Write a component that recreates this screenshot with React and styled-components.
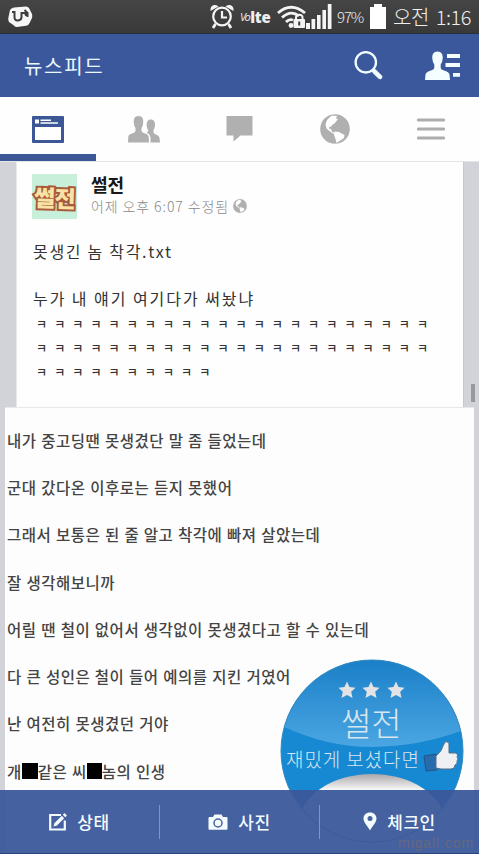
import React from "react";
import styled, { createGlobalStyle } from "styled-components";

const photoLines = [
  "내가 중고딩땐 못생겼단 말 좀 들었는데",
  "군대 갔다온 이후로는 듣지 못했어",
  "그래서 보통은 된 줄 알고 착각에 빠져 살았는데",
  "잘 생각해보니까",
  "어릴 땐 철이 없어서 생각없이 못생겼다고 할 수 있는데",
  "다 큰 성인은 철이 들어 예의를 지킨 거였어",
  "난 여전히 못생겼던 거야",
];

const laughs = [22, 22, 10];

export default function App() {
  return (
    <>
      <GlobalStyle />
      <Screen>
        <StatusBar />
        <Header>
          <HeaderTitle>뉴스피드</HeaderTitle>
          <HeaderIcons>
            <SearchIcon />
            <ContactsIcon />
          </HeaderIcons>
        </Header>
        <Tabs>
          <Tab $active>
            <FeedIcon />
          </Tab>
          <Tab>
            <FriendsIcon />
          </Tab>
          <Tab>
            <ChatIcon />
          </Tab>
          <Tab>
            <GlobeIcon size={30} />
          </Tab>
          <Tab>
            <MenuIcon />
          </Tab>
        </Tabs>
        <Feed>
          <Post>
            <PostHead>
              <Avatar>
                <span>썰전</span>
              </Avatar>
              <PostInfo>
                <Author>썰전</Author>
                <Meta>
                  <span>어제 오후 6:07 수정됨</span>
                  <GlobeIcon size={14} />
                </Meta>
              </PostInfo>
            </PostHead>
            <PostTitle>못생긴 놈 착각.txt</PostTitle>
            <PostText>누가 내 얘기 여기다가 써놨냐</PostText>
            <Laughs>
              {laughs.map((count, i) => (
                <p key={i}>{Array(count).fill("ㅋ").join(" ")}</p>
              ))}
            </Laughs>
          </Post>
          <Photo>
            {photoLines.map((line) => (
              <PhotoLine key={line}>{line}</PhotoLine>
            ))}
            <PhotoLine>
              개<Censor $width={16} />
              같은 씨<Censor $width={15} />
              놈의 인생
            </PhotoLine>
            <Badge />
          </Photo>
          <ScrollThumb />
        </Feed>
        <Composer>
          <Action>
            <EditIcon />
            <span>상태</span>
          </Action>
          <Action>
            <CameraIcon />
            <span>사진</span>
          </Action>
          <Action>
            <PinIcon />
            <span>체크인</span>
          </Action>
          <Watermark>migall.com</Watermark>
        </Composer>
      </Screen>
    </>
  );
}

function StatusBar() {
  return (
    <StyledStatusBar>
      <svg width="25" height="22" viewBox="0 0 25 22">
        <path
          d="M6 1.5 18 .5Q20 .5 21 2L24 8Q24.5 10 24 12L21 18Q20 19.5 18 19.7L9 21Q7 21 6 19.5L1 16Q0 14 .3 12L2 4Q3 2 6 1.5Z"
          fill="#f6f6f6"
        />
        <path
          d="M4 6H6.500V11Q6.500 14.800 10 14.500 13.500 14.200 13.500 11V7H19.500M16.500 4 19.500 7 17 9.500M19.500 7V11"
          fill="none"
          stroke="#3d3d3d"
          strokeWidth="2"
        />
      </svg>
      <StatusItems>
        <svg width="24" height="25" viewBox="0 0 24 25">
          <g fill="none" stroke="#f4f4f4" strokeWidth="2.2">
            <circle cx="12" cy="12.5" r="8.8" />
            <path d="M12 7V13.5H17" />
            <path d="M5.5 20 3 24M18.5 20 21 24" strokeWidth="2.8" />
          </g>
          <path
            d="M.5 7Q0 2 4 1 7 .5 8.5 2.5ZM23.5 7Q24 2 20 1 17 .5 15.5 2.5Z"
            fill="#f4f4f4"
          />
        </svg>
        <Volte>
          <i>Vo</i>
          <b>lte</b>
        </Volte>
        <svg width="29" height="24" viewBox="0 0 29 24">
          <g fill="none" stroke="#f4f4f4" strokeWidth="2.8">
            <path d="M1 8Q14-3.5 28 8" />
            <path d="M5 12.5Q14 4.5 22 11" />
            <path d="M9 17Q12.5 13.5 16 15" />
          </g>
          <circle cx="14" cy="20.5" r="2.4" fill="#f4f4f4" />
          <rect x="16.5" y="14" width="11.5" height="9" rx="1" fill="#f4f4f4" />
          <path
            d="M19 14.5V12.5Q19 9.8 22.3 9.8T25.5 12.5V14.5"
            fill="none"
            stroke="#f4f4f4"
            strokeWidth="2"
          />
          <path d="M22.2 16.5V20.5" stroke="#3d3d3d" strokeWidth="2" />
        </svg>
        <svg width="26" height="25" viewBox="0 0 26 25">
          <path
            d="M0 19H4V25H0ZM5.5 15H9.2V25H5.5ZM11 11H14.6V25H11ZM16.4 6H20V25H16.4ZM21.8 0H25.5V25H21.8Z"
            fill="#f4f4f4"
          />
        </svg>
        <Percent>97%</Percent>
        <svg width="16" height="25" viewBox="0 0 16 25">
          <path d="M4 0H12V3H16V25H0V3H4Z" fill="#fff" />
        </svg>
        <Clock>
          <span>오전</span> <span>1:16</span>
        </Clock>
      </StatusItems>
    </StyledStatusBar>
  );
}

function SearchIcon() {
  return (
    <svg width="29" height="29" viewBox="0 0 29 29" fill="none" stroke="#f0fcff">
      <circle cx="11.8" cy="11.3" r="10.2" strokeWidth="2.3" />
      <path d="M18.500 18.500 20.500 20.500" strokeWidth="2.5" />
      <path d="M20.500 20.500 26 25.800" strokeWidth="4.6" strokeLinecap="round" />
    </svg>
  );
}

function ContactsIcon() {
  return (
    <svg width="36" height="30" viewBox="0 0 36 30" fill="#f4fdff">
      <path d="M12.5.5C16.5.5 18 3.5 17.7 7.5Q17.5 11 15.7 13.5V17Q16 18.5 19 19.5 24 21 24.5 23.5L25 29H0L.5 23.5Q1 21 6 19.5 9 18.5 9.3 17V13.5Q7.5 11 7.3 7.5C7 3.5 8.5.5 12.5.5Z" />
      <path d="M22 3H35V7H22ZM20.5 12H35V16H20.5ZM28 22H35V25.800H28Z" />
    </svg>
  );
}

function FeedIcon() {
  return (
    <svg width="32" height="27" viewBox="0 0 32 27">
      <rect width="32" height="27" rx="1" fill="#3c5796" />
      <path d="M3 3.5H7V7.5H3ZM8.5 3.5H19V5H8.5ZM8.5 6.2H26V7.7H8.5ZM3 11H29V24H3Z" fill="#fff" />
    </svg>
  );
}

function FriendsIcon() {
  return (
    <svg width="32" height="27" viewBox="0 0 32 27" fill="#b0b0b0">
      <path d="M10.5 0C14.5 0 15.5 3 15.2 7Q15 10 13.5 12V15Q14 16.5 17 17.5 20.5 18.5 20.7 21L21 26.5H0L.3 21Q.5 18.5 4 17.5 7 16.5 7.5 15V12Q6 10 5.8 7C5.5 3 6.5 0 10.5 0Z" />
      <path d="M22.8 3.5C26 3.5 27.2 6 27 9.5Q26.8 12 25.5 14V16.5Q26 18 28.5 18.8 31.2 19.8 31.5 22L32 26.5H22.5V21.5Q22 18 18.5 16.8 20 16.3 20.2 14.5 18.8 12 18.7 9.5C18.5 6 19.7 3.5 22.8 3.5Z" />
    </svg>
  );
}

function ChatIcon() {
  return (
    <svg width="27" height="26" viewBox="0 0 27 26" fill="#b0b0b0">
      <path d="M.5 0H26.5V19.5H14.5L7.5 25.5V19.5H.5Z" />
    </svg>
  );
}

function GlobeIcon({ size }) {
  return (
    <svg width={size} height={size} viewBox="0 0 30 30">
      <circle cx="15" cy="15" r="14.8" fill="#b0b0b0" />
      <path
        d="M12 1.5 17 2 16 4.5 18 5 16.5 7 14.5 9.5 12 11 11 13 9.5 12.5 9 14.5 11.5 15.5 12 18 14.5 18.5 13.5 20 10 17.5 6.5 14.5 5.5 10.5 7 6 10 3Z"
        fill="#fff"
      />
      <path
        d="M14.5 17.5 19 18 24.5 21 24 24 19.5 27 16.5 29 15.5 25 14 21Z"
        fill="#fff"
      />
    </svg>
  );
}

function MenuIcon() {
  return (
    <svg width="28" height="22" viewBox="0 0 28 22">
      <path
        d="M1.5 2H26.5M1.5 11H26.5M1.5 20H26.5"
        stroke="#adadad"
        strokeWidth="3.2"
        strokeLinecap="round"
      />
    </svg>
  );
}

function EditIcon() {
  return (
    <svg width="18" height="18" viewBox="0 0 18 18" fill="none" stroke="#f3fbff">
      <path d="M12 2H1.2V16.5H15.8V7.5" strokeWidth="2.2" />
      <path d="M6.5 11.5 14 4" strokeWidth="3.4" />
      <path d="M15 3 16.7 1.3" strokeWidth="3.4" />
      <path d="M4.5 13.5 5.5 10 8 12.5Z" fill="#f3fbff" stroke="none" />
    </svg>
  );
}

function CameraIcon() {
  return (
    <svg width="20" height="16" viewBox="0 0 20 16">
      <path
        d="M1.5 3H5L6.5.5H13.5L15 3H18.5Q19.5 3 19.5 4V15Q19.5 15.8 18.5 15.8H1.5Q.5 15.8.5 15V4Q.5 3 1.5 3Z"
        fill="#f5fcff"
      />
      <circle cx="10" cy="9" r="4" fill="none" stroke="#4662a0" strokeWidth="1.5" />
    </svg>
  );
}

function PinIcon() {
  return (
    <svg width="14" height="19" viewBox="0 0 14 19">
      <path
        d="M7 .5C11 .5 13.5 3.2 13.5 6.5 13.5 10.5 9 14.5 7 18.5 5 14.5.5 10.5.5 6.5.5 3.2 3 .5 7 .5Z"
        fill="#f5fcff"
      />
      <circle cx="7" cy="6.5" r="2.5" fill="#4662a0" />
    </svg>
  );
}

function Badge() {
  const star = "M0-8.500 2.500-3 8.500-2.300 4.200 1.800 5.500 8 0 5-5.500 8-4.200 1.800-8.500-2.300-2.500-3Z";
  return (
    <StyledBadge>
      <svg width="184" height="184" viewBox="0 0 184 184">
        <defs>
          <linearGradient id="gloss" x1="0" y1="0" x2="0" y2="1">
            <stop offset="0" stopColor="#1a7fc8" />
            <stop offset="1" stopColor="#4ba6e2" />
          </linearGradient>
          <linearGradient id="hole" x1="0" y1="0" x2="0" y2="1">
            <stop offset="0" stopColor="#aaa7aa" />
            <stop offset="0.15" stopColor="#f4f3f3" />
            <stop offset="1" stopColor="#fff" />
          </linearGradient>
          <clipPath id="disc">
            <circle cx="92" cy="92" r="91" />
          </clipPath>
        </defs>
        <g clipPath="url(#disc)">
          <rect width="184" height="184" fill="#1689d2" />
          <path d="M0 0H184V71Q138 88 92 88T0 66Z" fill="url(#gloss)" />
          <ellipse cx="92" cy="165" rx="73" ry="50" fill="url(#hole)" />
        </g>
        <circle cx="92" cy="92" r="91" fill="none" stroke="#3489bd" />
        <g fill="#e3e3e6">
          <path d={star} transform="translate(67 31)" />
          <path d={star} transform="translate(91 31)" />
          <path d={star} transform="translate(116 31)" />
        </g>
        <g transform="translate(-1 -19)">
          <path d="M145 116 157 114 158 130 147 131Z" fill="#276bad" stroke="#245486" />
          <path
            d="M157 116Q163 111 164 106L166 102Q170 101 170 105V113H177Q180 115 178 117 180 119 178 121 179 124 176 125 176 129 172 129H162L157 128Z"
            fill="#eef0f3"
            stroke="#566f8b"
          />
        </g>
      </svg>
      <BadgeTitle>썰전</BadgeTitle>
      <BadgeText>재밌게 보셨다면</BadgeText>
    </StyledBadge>
  );
}

const GlobalStyle = createGlobalStyle`
  * {
    box-sizing: border-box;
  }

  body {
    margin: 0;
    font-family: "Noto Sans CJK KR", sans-serif;
    color: #333;
  }

  p {
    margin: 0;
  }

  svg {
    display: block;
    flex-shrink: 0;
  }
`;

const Screen = styled.div`
  position: relative;
  display: flex;
  flex-direction: column;
  width: 479px;
  height: 854px;
  overflow: hidden;
  background: #fff;
`;

const StyledStatusBar = styled.div`
  display: flex;
  justify-content: space-between;
  align-items: center;
  flex-shrink: 0;
  height: 34px;
  padding: 0 9px 0 8px;
  background: linear-gradient(#454545, #393939);
  border-bottom: 1px solid #25303f;
  color: #eee;
  white-space: nowrap;
`;

const StatusItems = styled.div`
  display: flex;
  align-items: center;
  height: 33px;
`;

const Volte = styled.span`
  display: flex;
  align-items: center;
  width: 34px;
  margin: 0 3px 0 6px;
  font-family: "Open Sans", sans-serif;
  letter-spacing: -0.8px;

  i {
    font-size: 11px;
    letter-spacing: -1.5px;
    margin-right: 1px;
  }

  b {
    font-size: 15px;
    font-weight: 800;
    letter-spacing: -0.3px;
  }
`;

const Percent = styled.span`
  width: 27px;
  margin: 0 6px 0 5px;
  font-size: 15px;
  font-weight: 300;
  letter-spacing: -1.1px;
`;

const Clock = styled.span`
  display: flex;
  gap: 7px;
  width: 77px;
  margin-left: 7px;
  font-size: 20px;
  font-weight: 300;
  line-height: 28px;
  letter-spacing: -0.5px;
`;

const Header = styled.header`
  display: flex;
  justify-content: space-between;
  align-items: center;
  flex-shrink: 0;
  height: 63px;
  padding: 0 18px 0 24px;
  background: #3a589b;
`;

const HeaderTitle = styled.h1`
  margin: 0;
  font-size: 20px;
  font-weight: 400;
  letter-spacing: 1.7px;
  color: #ecf8ff;
`;

const HeaderIcons = styled.div`
  display: flex;
  align-items: center;
  gap: 42px;
`;

const Tabs = styled.nav`
  display: flex;
  flex-shrink: 0;
  height: 65px;
  background: #fefefe;
  border-bottom: 1px solid #e4e5e8;
`;

const Tab = styled.div`
  flex: 1;
  display: flex;
  justify-content: center;
  align-items: center;
  height: 64px;
  padding-top: ${({ $active }) => ($active ? "7px" : "0")};
  border-bottom: ${({ $active }) => ($active ? "7px solid #3c5796" : "none")};
`;

const Feed = styled.main`
  position: relative;
  display: flex;
  flex-direction: column;
  flex: 1;
  background: #d2d3d9;
`;

const Post = styled.article`
  height: 245px;
  margin: 0 15px 0 16px;
  padding: 12px 16px 0;
  background: #fefefe;
  border-left: 1px solid #e9e9ec;
  border-right: 1px solid #c6c7cc;
  white-space: nowrap;
`;

const PostHead = styled.div`
  display: flex;
  gap: 14px;
  margin-left: -1px;
`;

const Avatar = styled.div`
  display: flex;
  justify-content: center;
  align-items: center;
  width: 45px;
  height: 45px;
  background: #c7efd9;

  span {
    font-size: 23px;
    font-weight: 900;
    letter-spacing: -0.5px;
    color: #f9e3a4;
    -webkit-text-stroke: 4px #a9593c;
    paint-order: stroke fill;
    transform: rotate(2deg);
  }
`;

const PostInfo = styled.div`
  display: flex;
  flex-direction: column;
`;

const Author = styled.span`
  font-size: 18px;
  font-weight: 700;
  line-height: 20px;
  color: #181818;
`;

const Meta = styled.div`
  display: flex;
  align-items: center;
  gap: 5px;
  height: 22px;
  margin-top: 1px;
  font-size: 14px;
  font-weight: 300;
  letter-spacing: 0.9px;
  color: #888;

  span {
    width: 137px;
  }
`;

const PostTitle = styled.p`
  margin-top: 20px;
  font-size: 16px;
  line-height: 24px;
  letter-spacing: 1.7px;
`;

const PostText = styled.p`
  margin-top: 23px;
  font-size: 16px;
  line-height: 24px;
  letter-spacing: 1.95px;
`;

const Laughs = styled.div`
  padding: 2px 0 0 3px;
  font-size: 12px;
  font-weight: 500;
  line-height: 24px;
  word-spacing: 4.4px;
`;

const Photo = styled.section`
  position: relative;
  flex: 1;
  margin: 0 5px;
  padding: 8px 0 0 2px;
  background: #fdfdfd;
  border-top: 1px solid #e8e8eb;
`;

const PhotoLine = styled.p`
  display: flex;
  align-items: center;
  height: 47.3px;
  font-size: 15.5px;
  font-weight: 500;
  letter-spacing: 0.5px;
  word-spacing: 0.7px;
  color: #444;
  white-space: pre;
`;

const Censor = styled.span`
  width: ${({ $width }) => $width}px;
  height: 16px;
  background: #000;
`;

const ScrollThumb = styled.div`
  position: absolute;
  top: 222px;
  right: 4px;
  width: 4px;
  height: 18px;
  background: #9799a0;
`;

const StyledBadge = styled.div`
  position: absolute;
  top: 251px;
  left: 275px;
  width: 184px;
  height: 184px;
  color: #d8e6ef;
  white-space: nowrap;

  > svg {
    position: absolute;
  }
`;

const BadgeTitle = styled.div`
  position: relative;
  padding: 43px 0 0 61px;
  font-size: 33px;
  font-weight: 300;
  line-height: 40px;
`;

const BadgeText = styled.div`
  position: relative;
  padding: 4px 0 0 6px;
  font-size: 19px;
  font-weight: 300;
  line-height: 26px;
  letter-spacing: 0.9px;
`;

const Composer = styled.footer`
  position: absolute;
  right: 0;
  bottom: 0;
  left: 0;
  display: flex;
  align-items: center;
  height: 64px;
  background: rgba(59, 88, 154, 0.95);
  border-bottom: 1px solid #2b4580;
`;

const Action = styled.div`
  flex: 1;
  display: flex;
  justify-content: center;
  align-items: center;
  gap: 10px;
  height: 34px;
  font-size: 17px;
  font-weight: 500;
  letter-spacing: 0.5px;
  color: #f3fbff;

  & + & {
    border-left: 1px solid #8195c0;
  }
`;

const Watermark = styled.span`
  position: absolute;
  right: 5px;
  bottom: 2px;
  font-family: "Liberation Sans", sans-serif;
  font-size: 14px;
  letter-spacing: 0.9px;
  color: #66687d;
`;
